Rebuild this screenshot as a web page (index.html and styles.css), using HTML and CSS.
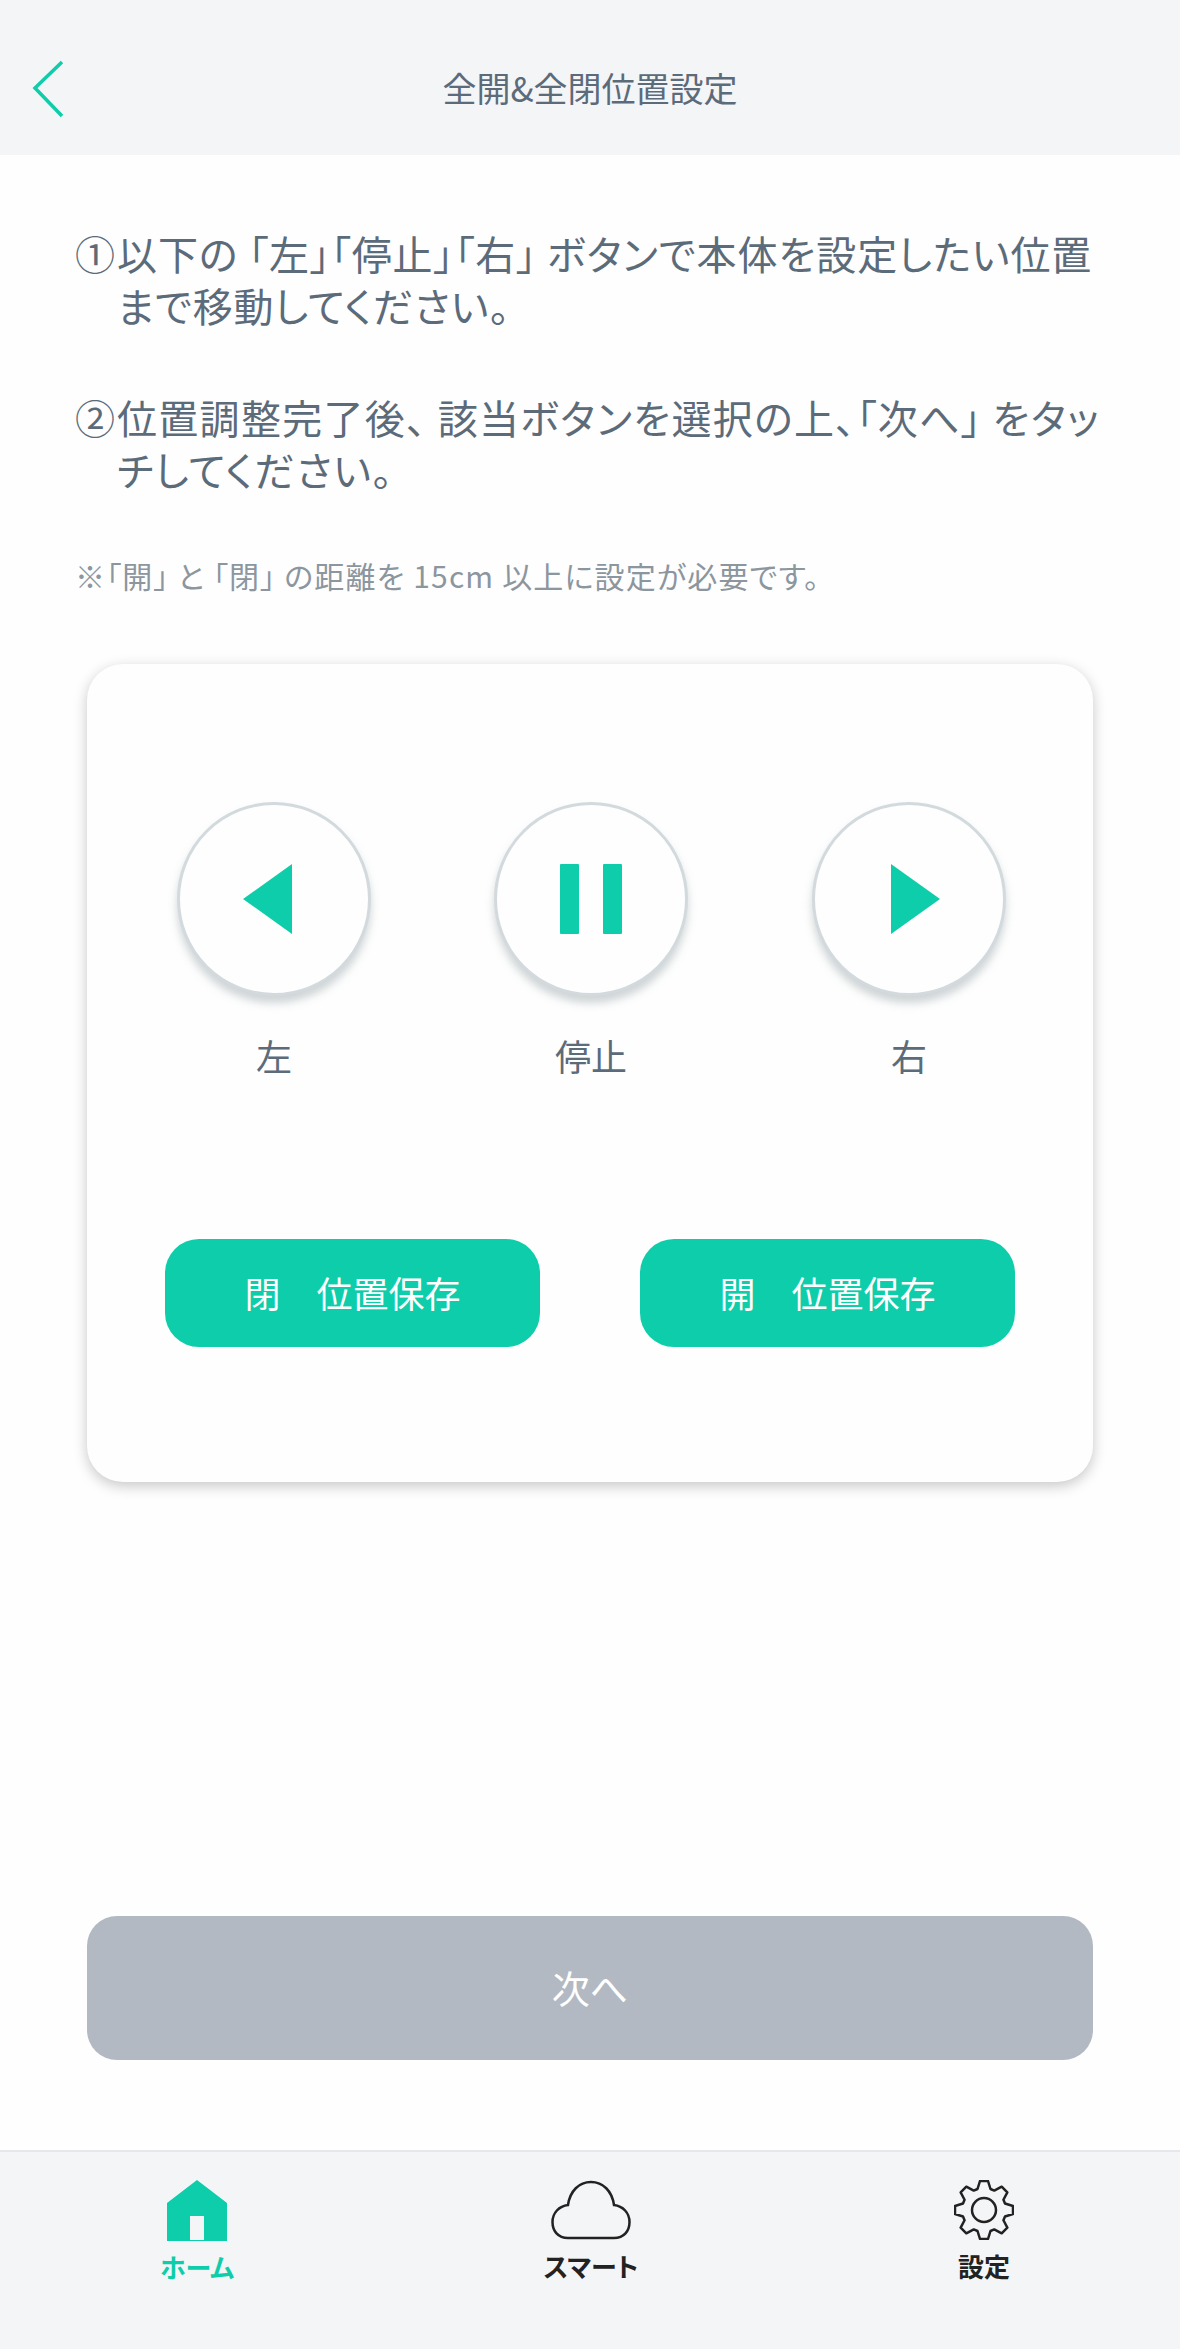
FILE: index.html
```html
<!DOCTYPE html>
<html lang="ja">
<head>
<meta charset="UTF-8">
<meta name="viewport" content="width=device-width, initial-scale=1.0">
<title>全開&全閉位置設定</title>
<link rel="stylesheet" href="styles.css">
</head>
<body>

<header class="top-bar">
  <a class="back" href="#">
    <svg width="34" height="58" viewBox="0 0 34 58"><path d="M31 2 L4 28 L31 56" fill="none" stroke="#0ecdaa" stroke-width="3.5"/></svg>
  </a>
  <h1 class="title">全開&amp;全閉位置設定</h1>
</header>

<main class="content">
  <div class="step"><span class="num">①</span><p>以下の 「左」「停止」「右」 ボタンで本体を設定したい位置<br>まで移動してください。</p></div>
  <div class="step step-second"><span class="num">②</span><p>位置調整完了後、 該当ボタンを選択の上、「次へ」 をタッ<br>チしてください。</p></div>
  <p class="note">※「開」 と 「閉」 の距離を 15cm 以上に設定が必要です。</p>

  <section class="card">
    <div class="controls">
      <div class="control">
        <button class="round">
          <svg class="arrow-left" width="50" height="70" viewBox="0 0 50 70"><path d="M49 0 V70 L0 35 Z" fill="#0ecdaa"/></svg>
        </button>
        <span class="control-label">左</span>
      </div>
      <div class="control">
        <button class="round">
          <svg width="62" height="70" viewBox="0 0 62 70"><rect x="0" y="0" width="19" height="70" rx="1" fill="#0ecdaa"/><rect x="43" y="0" width="19" height="70" rx="1" fill="#0ecdaa"/></svg>
        </button>
        <span class="control-label">停止</span>
      </div>
      <div class="control">
        <button class="round">
          <svg class="arrow-right" width="50" height="70" viewBox="0 0 50 70"><path d="M1 0 V70 L50 35 Z" fill="#0ecdaa"/></svg>
        </button>
        <span class="control-label">右</span>
      </div>
    </div>
    <div class="saves">
      <button class="save">閉　位置保存</button>
      <button class="save">開　位置保存</button>
    </div>
  </section>

  <button class="next">次へ</button>
</main>

<nav class="tab-bar">
  <a class="tab tab-active" href="#">
    <svg width="60" height="61" viewBox="0 0 60 61"><path fill-rule="evenodd" d="M30 0 L60 23 V61 H0 V23 Z M23 36 V60 H37 V36 Z" fill="#0ecdaa"/></svg>
    <span>ホーム</span>
  </a>
  <a class="tab" href="#">
    <svg width="80" height="60" viewBox="0 0 80 60"><path d="M17 58 C7 58 1.500 51 1.500 42 C1.500 33 8 26 17 25 C19 11 28 2 40 2 C52 2 61 11 63 25 C72 26 78.500 33 78.500 42 C78.500 51 73 58 63 58 Z" fill="none" stroke="#222" stroke-width="2.500"/></svg>
    <span>スマート</span>
  </a>
  <a class="tab" href="#">
    <svg width="60" height="60" viewBox="0 0 60 60"><polygon points="23.5,9 26,1 34,1 36.5,9 40.25,10.55 47.68,6.67 53.33,12.32 49.45,19.75 51,23.5 59,26 59,34 51,36.5 49.45,40.25 53.33,47.68 47.68,53.33 40.25,49.45 36.5,51 34,59 26,59 23.5,51 19.75,49.45 12.32,53.33 6.67,47.68 10.55,40.25 9,36.5 1,34 1,26 9,23.5 10.55,19.75 6.67,12.32 12.32,6.67 19.75,10.55" fill="none" stroke="#222" stroke-width="2.500" stroke-linejoin="round"/><circle cx="30" cy="30" r="12" fill="none" stroke="#222" stroke-width="2.500"/></svg>
    <span>設定</span>
  </a>
</nav>

</body>
</html>
```

FILE: styles.css
```css
* {
  box-sizing: border-box;
}
body {
  margin: 0;
  height: 2349px;
  display: flex;
  flex-direction: column;
  background-color: #fefefe;
  color: #5c6b7a;
  font-family: "Noto Sans CJK JP", "Noto Sans", sans-serif;
  font-feature-settings: "palt";
}
button {
  font-family: inherit;
  font-feature-settings: inherit;
  border: none;
  padding: 0;
}
a {
  text-decoration: none;
}

/* cabecera */
.top-bar {
  height: 155px;
  background-color: #f4f5f7;
  display: flex;
  align-items: center;
  justify-content: center;
  padding-top: 20px;
  position: relative;
  flex-shrink: 0;
}
.back {
  position: absolute;
  left: 31px;
  top: 60px;
  line-height: 0;
}
.title {
  margin: 0;
  font-size: 34px;
  font-weight: 400;
  line-height: 44px;
}

/* contenido */
.content {
  flex: 1;
  padding: 72px 87px 0;
  display: flex;
  flex-direction: column;
}
.step {
  display: flex;
  margin-left: -12px;
  font-size: 40px;
  line-height: 52px;
  letter-spacing: 0.9px;
  white-space: nowrap;
}
.step p {
  margin: 0;
}
.num {
  width: 42px;
  flex-shrink: 0;
}
.step-second {
  margin-top: 60px;
  letter-spacing: 1.3px;
}
.note {
  margin: 60px 0 0 -12px;
  font-size: 30px;
  line-height: 40px;
  letter-spacing: 1.15px;
  color: #8c969f;
  white-space: nowrap;
}

.card {
  margin-top: 69px;
  height: 818px;
  border-radius: 36px;
  background-color: #fefefe;
  box-shadow: 0 4px 14px rgba(0, 0, 0, 0.22);
  padding: 138px 0 0 29px;
}
.controls {
  display: grid;
  grid-template-columns: 316px 318px 318px;
}
.control {
  display: flex;
  flex-direction: column;
  align-items: center;
}
.round {
  width: 194px;
  height: 194px;
  border-radius: 50%;
  background-color: #fefefe;
  border: 3px solid #d3dadd;
  box-shadow: 0 7px 8px rgba(120, 135, 140, 0.35);
  display: flex;
  align-items: center;
  justify-content: center;
}
.arrow-left {
  margin-right: 12px;
}
.arrow-right {
  margin-left: 12px;
}
.control-label {
  margin-top: 34px;
  font-size: 36px;
  line-height: 50px;
}
.saves {
  margin-top: 159px;
  padding: 0 78px 0 49px;
  display: flex;
  justify-content: space-between;
}
.save {
  width: 375px;
  height: 108px;
  border-radius: 34px;
  background-color: #0ecdaa;
  color: #fff;
  font-size: 36px;
  padding-bottom: 2px;
}

.next {
  margin-top: 434px;
  height: 144px;
  border-radius: 30px;
  background-color: #b2b9c2;
  color: #fff;
  font-size: 38px;
  padding-bottom: 3px;
}

/* barra inferior */
.tab-bar {
  height: 199px;
  flex-shrink: 0;
  background-color: #f4f5f7;
  border-top: 2px solid #e6e7ea;
  display: grid;
  grid-template-columns: 394px 394px 392px;
  padding-top: 28px;
}
.tab {
  display: flex;
  flex-direction: column;
  align-items: center;
  color: #222;
  font-size: 26px;
  font-weight: 700;
  line-height: 34px;
  gap: 9px;
}
.tab-active {
  color: #0ecdaa;
}
```
